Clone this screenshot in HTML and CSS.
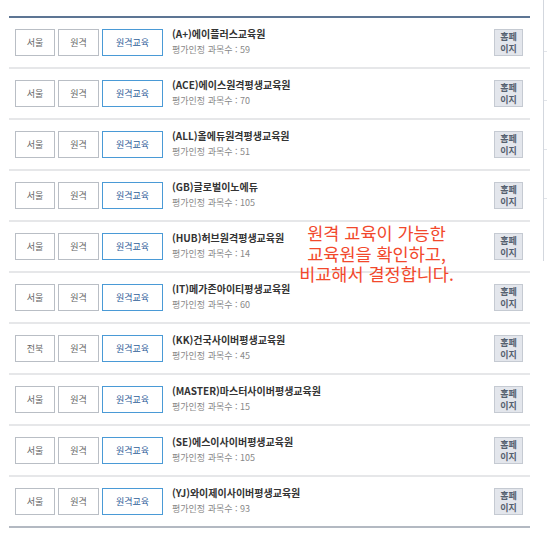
FILE: index.html
```html
<!DOCTYPE html>
<html lang="ko">
<head>
    <meta charset="UTF-8">
    <meta name="viewport" content="width=device-width, initial-scale=1.0">
    <title>원격교육 교육원 목록</title>
    <link rel="stylesheet" href="styles.css">
</head>
<body>
    <div class="page">
        <ul class="school-list">
            <li class="school">
                <div class="tags"><span class="tag">서울</span><span class="tag">원격</span><span class="tag tag-main">원격교육</span></div>
                <div class="info"><strong>(A+)에이플러스교육원</strong><span>평가인정 과목수 : 59</span></div>
                <a class="home-btn" href="#">홈페<br>이지</a>
            </li>
            <li class="school">
                <div class="tags"><span class="tag">서울</span><span class="tag">원격</span><span class="tag tag-main">원격교육</span></div>
                <div class="info"><strong>(ACE)에이스원격평생교육원</strong><span>평가인정 과목수 : 70</span></div>
                <a class="home-btn" href="#">홈페<br>이지</a>
            </li>
            <li class="school">
                <div class="tags"><span class="tag">서울</span><span class="tag">원격</span><span class="tag tag-main">원격교육</span></div>
                <div class="info"><strong>(ALL)올에듀원격평생교육원</strong><span>평가인정 과목수 : 51</span></div>
                <a class="home-btn" href="#">홈페<br>이지</a>
            </li>
            <li class="school">
                <div class="tags"><span class="tag">서울</span><span class="tag">원격</span><span class="tag tag-main">원격교육</span></div>
                <div class="info"><strong>(GB)글로벌이노에듀</strong><span>평가인정 과목수 : 105</span></div>
                <a class="home-btn" href="#">홈페<br>이지</a>
            </li>
            <li class="school">
                <div class="tags"><span class="tag">서울</span><span class="tag">원격</span><span class="tag tag-main">원격교육</span></div>
                <div class="info"><strong>(HUB)허브원격평생교육원</strong><span>평가인정 과목수 : 14</span></div>
                <a class="home-btn" href="#">홈페<br>이지</a>
            </li>
            <li class="school">
                <div class="tags"><span class="tag">서울</span><span class="tag">원격</span><span class="tag tag-main">원격교육</span></div>
                <div class="info"><strong>(IT)메가존아이티평생교육원</strong><span>평가인정 과목수 : 60</span></div>
                <a class="home-btn" href="#">홈페<br>이지</a>
            </li>
            <li class="school">
                <div class="tags"><span class="tag">전북</span><span class="tag">원격</span><span class="tag tag-main">원격교육</span></div>
                <div class="info"><strong>(KK)건국사이버평생교육원</strong><span>평가인정 과목수 : 45</span></div>
                <a class="home-btn" href="#">홈페<br>이지</a>
            </li>
            <li class="school">
                <div class="tags"><span class="tag">서울</span><span class="tag">원격</span><span class="tag tag-main">원격교육</span></div>
                <div class="info"><strong>(MASTER)마스터사이버평생교육원</strong><span>평가인정 과목수 : 15</span></div>
                <a class="home-btn" href="#">홈페<br>이지</a>
            </li>
            <li class="school">
                <div class="tags"><span class="tag">서울</span><span class="tag">원격</span><span class="tag tag-main">원격교육</span></div>
                <div class="info"><strong>(SE)에스이사이버평생교육원</strong><span>평가인정 과목수 : 105</span></div>
                <a class="home-btn" href="#">홈페<br>이지</a>
            </li>
            <li class="school">
                <div class="tags"><span class="tag">서울</span><span class="tag">원격</span><span class="tag tag-main">원격교육</span></div>
                <div class="info"><strong>(YJ)와이제이사이버평생교육원</strong><span>평가인정 과목수 : 93</span></div>
                <a class="home-btn" href="#">홈페<br>이지</a>
            </li>
        </ul>

        <div class="side">
            <span></span><span></span><span></span><span></span><span></span>
        </div>

        <p class="note">원격 교육이 가능한<br>교육원을 확인하고,<br>비교해서 결정합니다.</p>
    </div>
</body>
</html>
```

FILE: styles.css
```css
body {
    margin: 0;
    background: #fff;
    font-family: "Noto Sans CJK KR", "Noto Sans", sans-serif;
}
.page {
    position: relative;
    display: flex;
    align-items: flex-start;
    padding-left: 9px;
    height: 534px;
    overflow: hidden;
}
.school-list {
    list-style: none;
    margin: 16px 0 0;
    padding: 0;
    width: 522px;
    border-top: 2px solid #5d7594;
}
.school {
    display: flex;
    align-items: center;
    height: 49px;
    padding: 0 7px 0 6px;
    border-bottom: 2px solid #e6e7e9;
}
.school:last-child { border-bottom-color: #b3b9c2; }
.tags {
    display: flex;
    gap: 3px;
}
.tag {
    display: flex;
    align-items: center;
    justify-content: center;
    width: 38px;
    height: 25px;
    border: 1px solid #b9bec5;
    font-size: 9px;
    color: #666;
}
.tag:nth-child(2) { width: 39px; }
.tag-main {
    width: 59px;
    border-color: #4a9ad6;
    color: #2f5d99;
}
.info {
    flex: 1;
    display: flex;
    flex-direction: column;
    gap: 2px;
    margin-left: 9px;
    margin-top: -3px;
}
.info strong {
    font-size: 10px;
    font-weight: 700;
    color: #333;
    line-height: 14px;
}
.info span {
    font-size: 9px;
    color: #888;
    line-height: 13px;
}
.home-btn {
    display: flex;
    align-items: center;
    justify-content: center;
    text-align: center;
    width: 27px;
    height: 25px;
    background: #e3e6ec;
    border: 1px solid #c5cad2;
    font-size: 9px;
    line-height: 11.5px;
    font-weight: 700;
    color: #55606f;
    text-decoration: none;
}
.side {
    margin-left: 13px;
    width: 3px;
    height: 258px;
    border-left: 1px solid #d3d7de;
    display: flex;
    flex-direction: column;
    padding-top: 3px;
}
.side span {
    height: 48px;
    border-bottom: 1px solid #e1e4e9;
}
.side span:last-child { border-bottom: none; }
.note {
    position: absolute;
    left: 290px;
    top: 223px;
    width: 173px;
    margin: 0;
    text-align: center;
    font-size: 17.5px;
    line-height: 20.5px;
    color: #f2482c;
}
```
